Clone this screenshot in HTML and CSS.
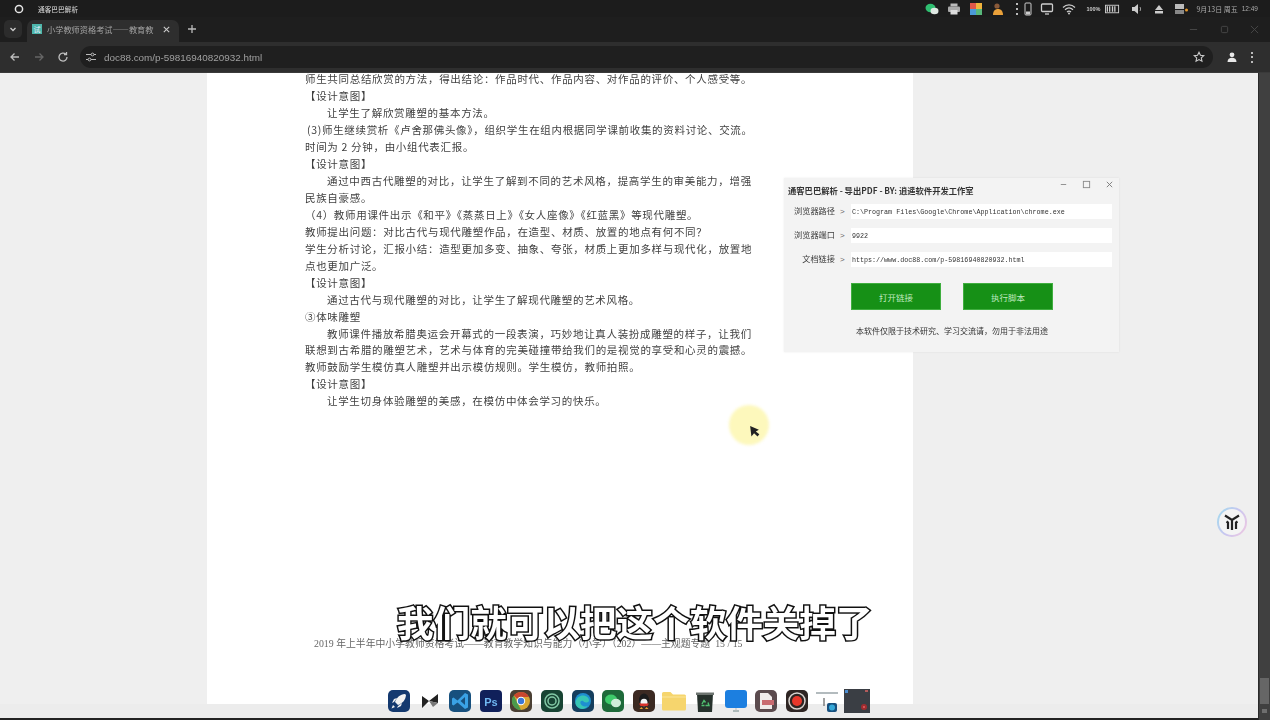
FILE: index.html
```html
<!DOCTYPE html>
<html lang="zh-CN">
<head>
<meta charset="utf-8">
<title>小学教师资格考试——教育教学</title>
<link rel="stylesheet" href="styles.css">
</head>
<body>
<div class="screen">
  <header class="sysbar">
    <div class="sys-left">
      <svg class="sys-logo" viewBox="0 0 10 10"><circle cx="5" cy="5" r="3.6" fill="none" stroke="#e6e6e6" stroke-width="1.5"/></svg>
      <span class="sys-app">通客巴巴解析</span>
    </div>
    <div class="tray">
      <svg class="ti" viewBox="0 0 14 12"><ellipse cx="5.5" cy="5" rx="5" ry="4.2" fill="#2fbf71"/><ellipse cx="9.5" cy="8" rx="4" ry="3.2" fill="#dfe8e2"/></svg>
      <svg class="ti" viewBox="0 0 14 12"><rect x="3.5" y="0.5" width="7" height="3" fill="#bbb"/><rect x="1" y="3.5" width="12" height="5.5" rx="1" fill="#aaa"/><rect x="3.5" y="7" width="7" height="4.5" fill="#ddd"/></svg>
      <svg class="ti" viewBox="0 0 14 12"><rect x="1" y="0" width="6" height="6" fill="#e0564a"/><rect x="7" y="0" width="6" height="6" fill="#f0b33c"/><rect x="1" y="6" width="6" height="6" fill="#4b9ad8"/><rect x="7" y="6" width="6" height="6" fill="#58b87a"/></svg>
      <svg class="ti" viewBox="0 0 14 12"><circle cx="6" cy="3" r="2.6" fill="#8a5a3a"/><path d="M2 12c0-4 2-6 5-6s5 2 5 6z" fill="#eaa13a"/></svg>
      <span class="tray-dots"></span>
      <svg class="ti ti-phone" viewBox="0 0 8 14"><rect x="1" y="1" width="6" height="12" rx="1" fill="none" stroke="#ccc" stroke-width="1"/><rect x="2" y="9.500" width="4" height="3" fill="#ccc"/></svg>
      <svg class="ti" viewBox="0 0 14 12"><rect x="1.500" y="1" width="11" height="7.500" rx="1" fill="none" stroke="#ccc" stroke-width="1.300"/><path d="M5 11h4" stroke="#ccc" stroke-width="1.300"/></svg>
      <svg class="ti" viewBox="0 0 14 12"><path d="M1 4.500c3.500-3.500 8.500-3.500 12 0M3 6.800c2.500-2.400 5.500-2.400 8 0M5 9c1.300-1.100 2.700-1.100 4 0" fill="none" stroke="#ccc" stroke-width="1.200"/><circle cx="7" cy="10.500" r="1" fill="#ccc"/></svg>
      <span class="tray-text">100%</span>
      <svg class="ti ti-wide" viewBox="0 0 16 10"><rect x="0.500" y="1" width="14" height="8" fill="none" stroke="#ccc"/><path d="M2.500 2v6M5 2v6M8 2v6M10.500 2v6" stroke="#ccc" stroke-width="1.400"/></svg>
      <svg class="ti" viewBox="0 0 14 12"><path d="M2 4h2.500L8 1v10L4.500 8H2z" fill="#ccc"/><path d="M10 4c.8 1.300.8 2.700 0 4" stroke="#999" fill="none"/></svg>
      <svg class="ti" viewBox="0 0 14 12"><path d="M7 2l4 5H3z" fill="#ccc"/><rect x="3" y="8" width="8" height="2.500" fill="#ccc"/></svg>
      <svg class="ti" viewBox="0 0 14 12"><rect x="1" y="1" width="9" height="5" fill="#bbb"/><rect x="1" y="7" width="9" height="4" fill="#888"/><circle cx="12.500" cy="7" r="1.500" fill="#e89a2d"/></svg>
      <span class="tray-date">9月13日 周五</span>
      <span class="tray-time">12:49</span>
    </div>
  </header>

  <nav class="tabstrip">
    <button class="tab-menu"><svg viewBox="0 0 10 10"><path d="M2.500 4l2.500 2.500L7.500 4" fill="none" stroke="#ccc" stroke-width="1.300"/></svg></button>
    <div class="tab">
      <span class="favicon">试</span>
      <span class="tab-title">小学教师资格考试——教育教</span>
      <svg class="tab-close" viewBox="0 0 10 10"><path d="M2 2l6 6M8 2l-6 6" stroke="#ccc" stroke-width="1.200"/></svg>
    </div>
    <svg class="tab-new" viewBox="0 0 10 10"><path d="M5 1v8M1 5h8" stroke="#bbb" stroke-width="1.300"/></svg>
    <div class="win-ctrl">
      <svg viewBox="0 0 10 10"><path d="M1 5h8" stroke="#4a4a4a" stroke-width="1"/></svg>
      <svg viewBox="0 0 10 10"><rect x="1.500" y="1.500" width="7" height="7" rx="1.500" fill="none" stroke="#4a4a4a"/></svg>
      <svg viewBox="0 0 10 10"><path d="M1 1l8 8M9 1l-8 8" stroke="#4a4a4a" stroke-width="1"/></svg>
    </div>
  </nav>

  <div class="toolbar">
    <svg class="nav-ic" viewBox="0 0 12 12"><path d="M10 6H2M5.500 2.500L2 6l3.500 3.500" fill="none" stroke="#bdbdbd" stroke-width="1.300"/></svg>
    <svg class="nav-ic" viewBox="0 0 12 12"><path d="M2 6h8M6.500 2.500L10 6 6.500 9.500" fill="none" stroke="#666" stroke-width="1.300"/></svg>
    <svg class="nav-ic" viewBox="0 0 12 12"><path d="M10 6a4 4 0 1 1-1.200-2.800M9.500 1v2.500H7" fill="none" stroke="#bdbdbd" stroke-width="1.300"/></svg>
    <div class="omnibox">
      <span class="site-ic"><svg viewBox="0 0 12 12"><path d="M1 3.500h5M9 3.500h2M1 8.500h2M6 8.500h5" stroke="#bbb" stroke-width="1.100"/><circle cx="7.500" cy="3.500" r="1.400" fill="none" stroke="#bbb"/><circle cx="4.500" cy="8.500" r="1.400" fill="none" stroke="#bbb"/></svg></span>
      <span class="url">doc88.com/p-59816940820932.html</span>
      <svg class="star" viewBox="0 0 12 12"><path d="M6 1.300l1.450 3 3.300.4-2.450 2.250.65 3.250L6 8.600l-2.950 1.600.65-3.250L1.250 4.700l3.300-.4z" fill="none" stroke="#ccc" stroke-width="1.100"/></svg>
    </div>
    <span class="avatar"><svg viewBox="0 0 12 12"><circle cx="6" cy="3.800" r="2.400" fill="#e8e8e8"/><path d="M1.500 11c0-3 2-4.200 4.500-4.200s4.500 1.200 4.500 4.200z" fill="#e8e8e8"/></svg></span>
    <span class="kebab"></span>
  </div>

  <main class="viewport">
    <div class="canvas">
      <article class="sheet">
        <div class="doc-text">
          <p>师生共同总结欣赏的方法&#xFF0C;得出结论&#xFF1A;作品时代、作品内容、对作品的评价、个人感受等。</p>
          <p>【设计意图】</p>
          <p class="ind">让学生了解欣赏雕塑的基本方法。</p>
          <p class="nudge">(3)师生继续赏析《卢舍那佛头像》&#xFF0C;组织学生在组内根据同学课前收集的资料讨论、交流。</p>
          <p>时间为 2 分钟&#xFF0C;由小组代表汇报。</p>
          <p>【设计意图】</p>
          <p class="ind">通过中西古代雕塑的对比&#xFF0C;让学生了解到不同的艺术风格&#xFF0C;提高学生的审美能力&#xFF0C;增强</p>
          <p>民族自豪感。</p>
          <p>&#xFF08;4&#xFF09;教师用课件出示《和平》《蒸蒸日上》《女人座像》《红蓝黑》等现代雕塑。</p>
          <p>教师提出问题&#xFF1A;对比古代与现代雕塑作品&#xFF0C;在造型、材质、放置的地点有何不同&#xFF1F;</p>
          <p>学生分析讨论&#xFF0C;汇报小结&#xFF1A;造型更加多变、抽象、夸张&#xFF0C;材质上更加多样与现代化&#xFF0C;放置地</p>
          <p>点也更加广泛。</p>
          <p>【设计意图】</p>
          <p class="ind">通过古代与现代雕塑的对比&#xFF0C;让学生了解现代雕塑的艺术风格。</p>
          <p>③体味雕塑</p>
          <p class="ind">教师课件播放希腊奥运会开幕式的一段表演&#xFF0C;巧妙地让真人装扮成雕塑的样子&#xFF0C;让我们</p>
          <p>联想到古希腊的雕塑艺术&#xFF0C;艺术与体育的完美碰撞带给我们的是视觉的享受和心灵的震撼。</p>
          <p>教师鼓励学生模仿真人雕塑并出示模仿规则。学生模仿&#xFF0C;教师拍照。</p>
          <p>【设计意图】</p>
          <p class="ind">让学生切身体验雕塑的美感&#xFF0C;在模仿中体会学习的快乐。</p>
        </div>
        <footer class="doc-foot">2019 年上半年中小学教师资格考试——教育教学知识与能力&#xFF08;小学&#xFF09;&#xFF08;202&#xFF09;——主观题专题 &nbsp;15 / 15</footer>
      </article>
    </div>
    <div class="scrollbar"><span class="thumb"></span><span class="arrow"></span></div>

    <section class="tool-win">
      <div class="tool-title">
        <span>通客巴巴解析 - 导出PDF - BY: 逍遥软件开发工作室</span>
        <div class="tool-ctrl">
          <svg viewBox="0 0 10 10"><path d="M2 5h6" stroke="#888"/></svg>
          <svg viewBox="0 0 10 10"><rect x="1.500" y="1.500" width="7" height="7" fill="none" stroke="#888"/></svg>
          <svg viewBox="0 0 10 10"><path d="M2 2l6 6M8 2l-6 6" stroke="#777"/></svg>
        </div>
      </div>
      <div class="tool-form">
        <label>浏览器路径</label><span class="gt">&gt;</span><div class="field">C:\Program Files\Google\Chrome\Application\chrome.exe</div>
        <label>浏览器端口</label><span class="gt">&gt;</span><div class="field">9922</div>
        <label>文档链接</label><span class="gt">&gt;</span><div class="field">https://www.doc88.com/p-59816940820932.html</div>
      </div>
      <div class="tool-actions">
        <button class="green-btn">打开链接</button>
        <button class="green-btn">执行脚本</button>
      </div>
      <p class="tool-note">本软件仅限于技术研究、学习交流请&#xFF0C;勿用于非法用途</p>
    </section>

    <div class="cursor-spot"></div>
    <svg class="cursor" viewBox="0 0 12 16"><path d="M1 1l1.500 12 3-3.500 4 3.500 2-2.500-4-3 3.500-2z" fill="#222"/></svg>

    <div class="assist">
      <svg viewBox="0 0 20 20"><path d="M3 3.500L10 8l7-4.500M10 8v10M4.500 9.500L6 10.500V17M15.500 9.500L14 10.500V17" fill="none" stroke="#222" stroke-width="2.200"/></svg>
    </div>

    <div class="subtitle">我们就可以把这个软件关掉了</div>

    <div class="dock">
      <svg class="di" viewBox="0 0 22 22"><rect width="22" height="22" rx="5" fill="#14396f"/><path d="M17 4c-5 .5-8 3-10 8l3 3c5-2 7.500-5 8-10zM6 12l-2 1 2-4 3-1zM10 16l-1 2 4-2 1-3zM5 15l-1.500 3.500L7 17z" fill="#f2f2f2"/></svg>
      <svg class="di" viewBox="0 0 22 22"><path d="M3 6l7 5-7 7zM19 4v9l-9-2z" fill="#222"/><path d="M10 11l9 2-5 4z" fill="#777"/></svg>
      <svg class="di" viewBox="0 0 22 22"><rect width="22" height="22" rx="5" fill="#17507e"/><path d="M16 3l3 1.500v13L16 19l-7.500-6.500L4.500 15.500l-1.500-1v-6l1.500-1 4 3zM16 7l-4.500 4 4.500 4z" fill="#3aa2e6"/></svg>
      <svg class="di" viewBox="0 0 22 22"><rect width="22" height="22" rx="4" fill="#10205a"/><text x="11" y="16" text-anchor="middle" class="ps">Ps</text></svg>
      <svg class="di" viewBox="0 0 22 22"><rect width="22" height="22" rx="5" fill="#4a3f33"/><circle cx="11" cy="11" r="9" fill="#d9a732"/><path d="M11 2a9 9 0 0 1 8 5h-8a4 4 0 0 0-3.500 2L3.800 5.500A9 9 0 0 1 11 2z" fill="#c9472f"/><path d="M3.800 5.500L7.500 13 11 20A9 9 0 0 1 3.800 5.500z" fill="#4b9a4c"/><circle cx="11" cy="11" r="4.200" fill="#fff"/><circle cx="11" cy="11" r="3.200" fill="#3a78d8"/></svg>
      <svg class="di" viewBox="0 0 22 22"><rect width="22" height="22" rx="5" fill="#184433"/><circle cx="11" cy="11" r="7" fill="none" stroke="#82c8a4" stroke-width="1.500"/><circle cx="11" cy="11" r="4" fill="none" stroke="#82c8a4" stroke-width="1.500"/><circle cx="11" cy="11" r="1.500" fill="#184433"/></svg>
      <svg class="di" viewBox="0 0 22 22"><rect width="22" height="22" rx="5" fill="#163f5e"/><circle cx="11" cy="11" r="8" fill="#1f8fd0"/><path d="M3.500 12c1-5 5-7 8.500-6.500 3 .5 5 2.500 5 5 0 1.500-1.500 2-3 2-2 0-2-1-3-1.500-3-1-4 3 0 5 2 1 4 .5 5-.5-2 3.500-7 4.500-10 2-2-1.500-2.700-3.500-2.500-5.500z" fill="#37c6b5"/></svg>
      <svg class="di" viewBox="0 0 22 22"><rect width="22" height="22" rx="5" fill="#1e6a3a"/><ellipse cx="9" cy="9.500" rx="6" ry="5" fill="#3ecb6b"/><ellipse cx="14" cy="13" rx="5" ry="4.200" fill="#cfeed9"/></svg>
      <svg class="di" viewBox="0 0 22 22"><rect width="22" height="22" rx="5" fill="#3c2a22"/><ellipse cx="11" cy="10" rx="5" ry="6.500" fill="#1c1c1c"/><ellipse cx="11" cy="12.500" rx="3.500" ry="3.800" fill="#f3f3f3"/><path d="M6 13.500h10l-1.500 2.500h-7z" fill="#d8322a"/><path d="M8.500 17l-2 2h3.500zM13.500 17l2 2H12z" fill="#e8a030"/></svg>
      <svg class="di di-folder" viewBox="0 0 24 22"><path d="M0 3.500A1.500 1.500 0 0 1 1.500 2h7l2.500 2.500h11.500A1.500 1.500 0 0 1 24 6v13a1.500 1.500 0 0 1-1.500 1.500h-21A1.500 1.500 0 0 1 0 19z" fill="#f6d56d"/><path d="M0 7h24" stroke="#fbe69c"/></svg>
      <svg class="di" viewBox="0 0 22 22"><path d="M3 4h16l-1 18H4z" fill="#26312c"/><path d="M2 2.500h18V5H2z" fill="#6d7470"/><path d="M8 14l2-3.500 1.500 2M14 12.500l1 3h-3.500M7.500 15.500h3" fill="none" stroke="#4fbf70" stroke-width="1.400"/></svg>
      <svg class="di" viewBox="0 0 22 22"><rect y="0" width="22" height="18" rx="3" fill="#1c7fe0"/><path d="M8 21h6" stroke="#9aa" stroke-width="1.500"/><path d="M11 18v3" stroke="#bbb"/></svg>
      <svg class="di" viewBox="0 0 22 22"><rect width="22" height="22" rx="5" fill="#5b4b4e"/><path d="M5 3h8l4 4v12H5z" fill="#f0ebea"/><rect x="7" y="10" width="12" height="5" fill="#c96b70"/></svg>
      <svg class="di" viewBox="0 0 22 22"><rect width="22" height="22" rx="5" fill="#2e2523"/><circle cx="11" cy="11" r="8" fill="none" stroke="#d9d4d0" stroke-width="1.500"/><circle cx="11" cy="11" r="5" fill="#e8372a"/></svg>
      <svg class="di" viewBox="0 0 22 22"><path d="M0 3h22" stroke="#9aa4a8" stroke-width="1.500"/><path d="M8 8v8" stroke="#444"/><rect x="11" y="13" width="10" height="9" rx="2" fill="#17507e"/><circle cx="16" cy="17.500" r="3" fill="#35a8d8"/></svg>
      <svg class="di di-last" viewBox="0 0 26 24"><rect width="26" height="24" fill="#3a3e44"/><rect x="1" y="1" width="3" height="3" fill="#4c8dd0"/><rect x="21" y="1" width="3" height="2" fill="#b05a5a"/><circle cx="20" cy="18" r="3" fill="#a02c30"/><circle cx="20" cy="18" r="1" fill="#e06060"/></svg>
    </div>
    <div class="dock-floor"></div>
  </main>
</div>
</body>
</html>
```

FILE: styles.css
```css
* { box-sizing: border-box; margin: 0; padding: 0; }
html, body { height: 100%; }
body {
  width: 1270px; height: 720px; overflow: hidden;
  background: #1e1e1e;
  font-family: "Noto Sans CJK SC", "Liberation Sans", sans-serif;
}
.screen { display: flex; flex-direction: column; height: 720px; }

/* system bar */
.sysbar {
  height: 17px; flex: none; background: #1c1c1c;
  display: flex; align-items: center; justify-content: space-between;
  padding: 0 12px 0 14px;
}
.sys-left { display: flex; align-items: center; gap: 14px; }
.sys-logo { width: 10px; height: 10px; display: block; }
.sys-app { font-size: 6.700px; font-weight: 500; color: #c8c8c8; filter: blur(.3px); }
.tray { display: flex; align-items: center; filter: blur(.3px); }
.ti { width: 14px; height: 12px; display: block; margin-right: 8px; }
.ti-phone { width: 8px; height: 14px; margin-right: 8px; }
.ti-wide { width: 15px; margin: 0 10px 0 5px; }
.tray-dots { width: 2px; height: 12px; margin-right: 6px; margin-left: 3px; background: repeating-linear-gradient(#bbb 0 2px, transparent 2px 5px); }
.tray-text { font: 700 5.500px "Liberation Sans", sans-serif; color: #ccc; margin-left: 2px; }
.tray-date { font-size: 7px; color: #aaa; }
.tray-time { font: 6.500px "Liberation Sans", sans-serif; color: #aaa; margin-left: 4px; }

/* tabs */
.tabstrip {
  height: 25px; flex: none; background: #1e1e1e;
  display: flex; align-items: flex-end; padding-left: 4px;
}
.tab-menu {
  width: 18px; height: 18px; margin-bottom: 4px; border: 0; border-radius: 5px;
  background: #2c2c2c; display: flex; align-items: center; justify-content: center;
}
.tab-menu svg { width: 10px; height: 10px; }
.tab {
  width: 152px; height: 22px; margin-left: 5px; background: #2e2e2e;
  border-radius: 7px 7px 0 0;
  display: flex; align-items: center; padding: 0 6px 4px 5px;
}
.favicon {
  width: 10px; height: 10px; flex: none; background: #4db6ac; color: #eef;
  font-size: 7px; line-height: 10px; text-align: center;
}
.tab-title {
  margin-left: 5px; width: 110px; white-space: nowrap;
  font-size: 8.200px; color: #a4a4a4; filter: blur(.25px);
}
.tab-close { width: 9px; height: 9px; margin-left: 5px; flex: none; }
.tab-new { width: 10px; height: 10px; margin: 0 0 8px 8px; }
.win-ctrl {
  margin-left: auto; width: 70px; margin-right: 11px; margin-bottom: 8px;
  display: flex; justify-content: space-between;
}
.win-ctrl svg { width: 9px; height: 9px; }

/* toolbar */
.toolbar {
  height: 31px; flex: none; background: #2e2e2e;
  border-bottom: 1px solid #3a3a3a;
  display: flex; align-items: center; padding-left: 9px;
}
.nav-ic { width: 12px; height: 12px; margin-right: 12px; flex: none; }
.omnibox {
  width: 1133px; height: 22px; margin-left: -1px; border-radius: 11px; background: #1f1f1f;
  display: flex; align-items: center; padding: 0 8px 0 3px;
}
.site-ic { width: 12px; height: 12px; margin-left: 2px; display: block; }
.site-ic svg { width: 12px; height: 12px; display: block; }
.url { margin-left: 7px; font: 9.900px "Liberation Sans", sans-serif; color: #a0a0a0; filter: blur(.25px); }
.star { width: 12px; height: 12px; margin-left: auto; }
.avatar { width: 12px; height: 12px; margin-left: 13px; }
.avatar svg { width: 12px; height: 12px; display: block; }
.kebab { width: 2px; height: 11px; margin-left: 13px; background: repeating-linear-gradient(#bbb 0 2px, transparent 2px 4.500px); }

/* viewport */
.viewport { position: relative; flex: 1; display: flex; min-height: 0; background: #efefef; }
.canvas { flex: 1; padding-left: 207px; height: 631px; }
.scrollbar { width: 12px; background: #404040; border-left: 1px solid #2a2a2a; position: relative; }
.thumb { position: absolute; left: 1px; right: 1px; top: 605px; height: 26px; background: #666; }
.arrow { position: absolute; left: 3px; top: 636px; width: 5px; height: 4px; background: #6e6e6e; }

.sheet {
  width: 706px; height: 631px; background: #fff;
  padding-left: 98px; display: flex; flex-direction: column;
}
.doc-text {
  margin-top: -1.800px; width: 452px;
  font-size: 10.500px; line-height: 16.950px; letter-spacing: .68px;
  color: #3f3f3f; filter: blur(.35px); white-space: nowrap;
}
.ind { padding-left: 22px; }
.nudge { padding-left: 2px; }
.doc-foot {
  margin-top: 226px; margin-left: 9px; white-space: nowrap;
  font: 400 9.850px "Liberation Serif", "Noto Sans CJK SC", serif;
  color: #666; filter: blur(.35px);
}

/* floating tool window */
.tool-win {
  position: absolute; left: 784px; top: 105px; width: 335px; height: 174px;
  background: #f3f3f3; box-shadow: 0 0 2px rgba(0,0,0,.08);
  display: flex; flex-direction: column; padding: 0 5px 0 4px;
}
.tool-title {
  height: 21px; margin-top: 1px; display: flex; justify-content: space-between; align-items: center;
  font-size: 8.300px; font-weight: 700; color: #333; filter: blur(.2px);
}
.tool-ctrl { display: flex; gap: 14px; align-self: flex-start; margin-top: 1px; }
.tool-ctrl svg { width: 9px; height: 9px; }
.tool-form {
  display: grid; grid-template-columns: 47px 16px 261px; row-gap: 9px; margin-top: 4px;
  align-items: center;
}
.tool-form label { text-align: right; font-size: 8.200px; line-height: 1; padding-bottom: 2px; color: #3c3c3c; filter: blur(.2px); }
.gt { font: 8px "Liberation Sans", sans-serif; color: #666; padding-left: 5px; }
.field {
  height: 15px; background: #fff; padding-left: 1px; white-space: nowrap;
  font: 6.700px/16px "Liberation Mono", monospace; color: #333; filter: blur(.2px);
}
.tool-actions { display: flex; gap: 22px; margin: 16px 0 0 63px; }
.green-btn {
  width: 90px; height: 27px; background: #169016; border: 1px solid #3fae3f;
  font: 8.500px "Noto Sans CJK SC", sans-serif; color: #bfe8bf;
}
.tool-note {
  margin: 15px 0 0 68px; width: 191px; white-space: nowrap; text-align: center;
  font-size: 8px; line-height: 12px; color: #333; filter: blur(.2px);
}

/* cursor highlight */
.cursor-spot {
  position: absolute; left: 729px; top: 332px; width: 40px; height: 40px; border-radius: 50%;
  background: #fdf8bc; filter: blur(1.500px);
}
.cursor { position: absolute; left: 749px; top: 352px; width: 11px; height: 14px; }

/* side assistant */
.assist {
  position: absolute; left: 1217px; top: 434px; width: 30px; height: 30px; border-radius: 50%;
  padding: 3px;
  border: 2px solid transparent;
  background-image: linear-gradient(#f4f4f4, #f4f4f4), linear-gradient(120deg, #9fdcee, #c9c6f0, #f3c8e0);
  background-origin: border-box; background-clip: padding-box, border-box;
}
.assist svg { width: 20px; height: 20px; display: block; filter: blur(.3px); }

/* subtitle */
.subtitle {
  position: absolute; left: 397px; top: 522px; white-space: nowrap;
  font-size: 36.600px; line-height: 54px; font-weight: 700; color: #fff;
  -webkit-text-stroke: 3px #111; paint-order: stroke fill; filter: blur(.3px);
}

/* dock */
.dock {
  position: absolute; left: 388px; top: 616px; height: 24px;
  display: flex; align-items: center; gap: 8.600px; z-index: 2; filter: blur(.3px);
}
.di { width: 22px; height: 22px; display: block; flex: none; }
.di-folder { width: 24px; margin: 0 -1px; }
.di-last { width: 26px; height: 24px; margin-left: -3px; }
.ps { font: 700 11px "Liberation Sans", sans-serif; fill: #6fb7f2; }
.dock-floor {
  position: absolute; left: 0; right: 12px; bottom: 0; height: 16px;
  background: #ececec; border-bottom: 2px solid #222;
}
```
